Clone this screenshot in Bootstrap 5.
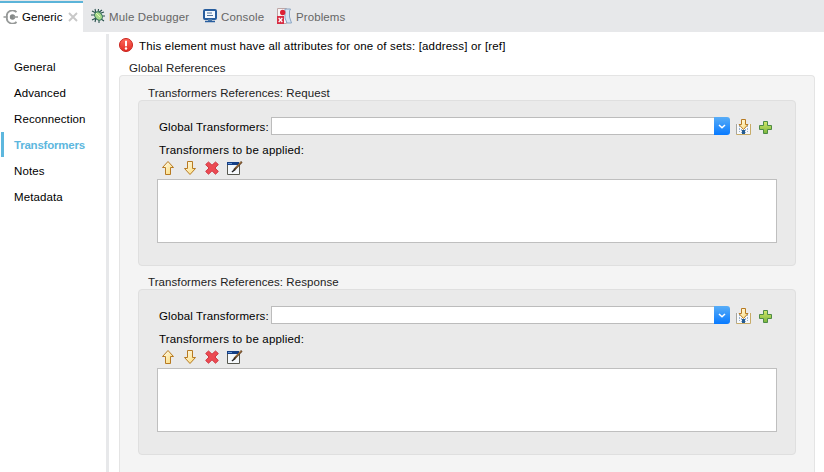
<!DOCTYPE html>
<html lang="en">
<head>
<meta charset="utf-8">
<meta name="viewport" content="width=device-width, initial-scale=1">
<title>Generic</title>
<link href="https://cdn.jsdelivr.net/npm/bootstrap@5.3.0/dist/css/bootstrap.min.css" rel="stylesheet">
<style>
body{font-family:"Liberation Sans",Arial,sans-serif;font-size:11.5px;line-height:14px;letter-spacing:.16px;color:#000;background:#fff;height:472px;overflow:hidden}
svg{display:block;flex:none}
.tabbar{height:32px;background:#e7e8ea;color:#666}
.tabbar .nav-item{height:32px;padding-top:2px;gap:4px}
.tabbar .nav-item>svg{margin-bottom:2px}
.tabbar .tab-active>svg{margin-bottom:0}
.tabbar .tab-active{width:83px;background:#fff;color:#000;border-top:1px solid #e7e8ea;box-shadow:inset 0 2px #5bb4d9;padding-left:3px;padding-top:1px;letter-spacing:.03px}
.tab-active span{width:42px}
.tab-debug{width:113px;padding-left:8px;letter-spacing:.12px}
.tab-console{width:81px;padding-left:7px}
.tab-problems{letter-spacing:.1px}
.side{width:106px;padding-top:22px}
.side a{height:26px;padding-left:14px;color:#000;text-decoration:none;letter-spacing:.1px}
.side a.active{margin-left:1px;margin-bottom:1px;height:25px;padding:1px 0 0 13px;color:#5db7de;font-weight:bold;box-shadow:inset 3px 0 #5db7de;letter-spacing:-.22px}
.rule{width:3px;margin-top:2px;background:#e7e8ea}
.pane{padding:6px 9px 0 10px;min-width:0}
.notice{height:14px;gap:6px;letter-spacing:.18px}
.notice span{padding-top:2px}
.outer{background:#f4f4f4;border:1px solid #e4e4e4;border-bottom:0;border-radius:4px 4px 0 0;height:410px;padding:10px 18px 0}
.inner{background:#eaeaea;border:1px solid #dfdfdf;border-radius:4px;height:166px;padding:16px 18px 0}
.caption-line{color:#222;height:14px;padding-left:10px;letter-spacing:.08px}
.second{margin-top:9px}
.picker{height:18px}
.picker-label{width:114px;padding:3px 0 0 2px;white-space:nowrap;letter-spacing:.12px}
.combo{width:459px}
.combo .field{background:#fff;border:1px solid #bcbcbc;border-right:0}
.combo .drop{width:16px;background:linear-gradient(#58adf7,#087aff);border-radius:0 3px 3px 0}
.applied{margin-top:8px;padding-left:2px;letter-spacing:.18px}
.tools{height:16px;margin:3px 0;padding-left:4px;gap:8px}
.listing{height:64px;border:1px solid #bfbfbf;background:#fff}
</style>
<script src="https://cdn.jsdelivr.net/npm/bootstrap@5.3.0/dist/js/bootstrap.bundle.min.js"></script>
</head>
<body class="d-flex flex-column">
<svg width="0" height="0" class="position-absolute">
<defs>
<linearGradient id="gold" x2="1" y2="1"><stop stop-color="#fffdf0"/><stop offset="1" stop-color="#fbd973"/></linearGradient>
<linearGradient id="green" x2="0" y2="1"><stop stop-color="#d4e86a"/><stop offset="1" stop-color="#7ab63c"/></linearGradient>
<linearGradient id="alert" x2="0" y2="1"><stop stop-color="#ff6a5c"/><stop offset="1" stop-color="#e02a22"/></linearGradient>
<symbol id="up" viewBox="0 0 14 16"><path d="M7 1.500 12.500 7.500H9.500V14.500H4.500V7.500H1.500Z" fill="url(#gold)" stroke="#b77a22"/></symbol>
<symbol id="down" viewBox="0 0 14 16"><path d="M4.500 1.500H9.500V8.500H12.500L7 14.500 1.500 8.500H4.500Z" fill="url(#gold)" stroke="#b77a22"/></symbol>
<symbol id="del" viewBox="0 0 14 14"><path d="M3.500 1 7 4.200 10.500 1 13.300 3.500 10 7 13.300 10.500 10.500 13.200 7 9.800 3.500 13.200 .7 10.500 4 7 .7 3.500Z" fill="#ec4a52" stroke="#cf3640"/></symbol>
<symbol id="edit" viewBox="0 0 16 14"><path d="M.5 2.500H12.500V13.500H.5Z" fill="#f5f8fb" stroke="#57584f"/><path d="M0 1H12V4H0Z" fill="#153f86"/><path d="M1 2.500H5" stroke="#7faee8" stroke-width=".8"/><path d="M14.800 .8 7 9" stroke="#5b3d20" stroke-width="2"/><path d="M14.300 1 9 6.500" stroke="#d59a55" stroke-width=".8"/><path d="M5 11 8 8.500" stroke="#222" stroke-width="1.500"/></symbol>
<symbol id="import" viewBox="0 0 15 16"><path d="M.5 5V15.500H14.500V5" fill="#f6f8fb" stroke="#c7ab68"/><path d="M.5 5V15" stroke="#a5a59d"/><path d="M3.500 6V13M5.500 10V14M9.500 10V14M11.500 6V13" stroke="#9bb2cd" stroke-dasharray="2 1"/><path d="M6 11H9V15H6Z" fill="#245b91"/><path d="M5.500 .5H9.500V5.500H12L7.500 10.500 3 5.500H5.500Z" fill="url(#gold)" stroke="#b77a22"/></symbol>
<symbol id="add" viewBox="0 0 14 14"><path d="M5.500 .5H9.500V4.500H13.500V8.500H9.500V12.500H5.500V8.500H1.500V4.500H5.500Z" fill="url(#green)" stroke="#4d8b46"/></symbol>
<symbol id="chev" viewBox="0 0 8 5"><path d="M1 1 4 3.800 7 1" fill="none" stroke="#fff" stroke-width="1.500"/></symbol>
</defs>
</svg>
<nav class="tabbar nav flex-nowrap">
<div class="nav-item tab-active d-flex align-items-center"><svg width="15" height="14" viewBox="0 0 15 14"><path d="M13.500 2.200A5.500 5.500 0 0 0 4 7 5.500 5.500 0 0 0 13.500 11.800" fill="none" stroke="#969998" stroke-width="1.800"/><circle cx="9.500" cy="7" r="2.700" fill="#858988"/><path d="M.5 7H4M10 7H15" stroke="#969998" stroke-width="1.500"/></svg><span>Generic</span><svg width="10" height="10" viewBox="0 0 10 10"><path d="M1 1 9 9M9 1 1 9" stroke="#c8c8c8" stroke-width="1.900"/></svg></div>
<div class="nav-item tab-debug d-flex align-items-center"><svg width="14" height="16" viewBox="0 0 14 16"><path d="M4 1 5 5 1 3M0 7H4M1 12 5 10 4 14M8 11V15M7.500 1 7 5 11 2M10 5 13 4M10 8H14M10 11 13 13" fill="none" stroke="#28504c" stroke-width="1.100"/><ellipse cx="7.500" cy="8" rx="3.500" ry="4.500" transform="rotate(-35 7.500 8)" fill="#a6d98b" stroke="#34705c"/><path d="M5 5 9 9" stroke="#e7f7b6"/></svg><span>Mule Debugger</span></div>
<div class="nav-item tab-console d-flex align-items-center"><svg width="14" height="14" viewBox="0 0 14 14"><rect x="1" y="1" width="12" height="9" rx="1" fill="#f4f9ff" stroke="#275d9e" stroke-width="2"/><path d="M4 4H9M4 6.500H10" stroke="#50729b"/><path d="M5 10H9V12H5Z" fill="#547eaa"/><path d="M2 12.500H12" stroke="#275d9e" stroke-width="1.500"/></svg><span>Console</span></div>
<div class="nav-item tab-problems d-flex align-items-center"><svg width="15" height="16" viewBox="0 0 15 16"><path d="M.5 .5H9.500V15.500H.5Z" fill="#f7f4f5" stroke="#bea6a6"/><path d="M8 1H13.500L12.500 3V9L14.500 15H10L8 10Z" fill="#d5e4f3" stroke="#8ba6c3"/><circle cx="5.700" cy="4.500" r="2.700" fill="#dc2136"/><rect y="8" width="7" height="8" fill="#d72e45"/><path d="M1.700 10 5.300 14M5.300 10 1.700 14" stroke="#fff" stroke-width="1.200"/></svg><span>Problems</span></div>
</nav>
<div class="d-flex flex-grow-1">
<nav class="side nav flex-column flex-nowrap">
<a href="#" class="d-flex align-items-center">General</a>
<a href="#" class="d-flex align-items-center">Advanced</a>
<a href="#" class="d-flex align-items-center">Reconnection</a>
<a href="#" class="d-flex align-items-center active">Transformers</a>
<a href="#" class="d-flex align-items-center">Notes</a>
<a href="#" class="d-flex align-items-center">Metadata</a>
</nav>
<div class="rule"></div>
<main class="pane flex-grow-1">
<div class="notice d-flex align-items-center"><svg width="14" height="14" viewBox="0 0 14 14"><circle cx="7" cy="7" r="6.500" fill="url(#alert)" stroke="#c9231d"/><path d="M7 2.800V8.200" stroke="#fff" stroke-width="2"/><circle cx="7" cy="10.500" r="1.200" fill="#fff"/></svg><span>This element must have all attributes for one of sets: [address] or [ref]</span></div>
<div class="caption-line second">Global References</div>
<section class="outer">
<div class="caption-line">Transformers References: Request</div>
<div class="inner">
<div class="picker d-flex"><label class="picker-label">Global Transformers:</label><div class="combo d-flex"><div class="field flex-grow-1"></div><div class="drop d-flex align-items-center justify-content-center"><svg width="8" height="5"><use href="#chev"/></svg></div></div><svg class="ms-1" width="19" height="18"><use href="#import" x="2" y="2" width="15" height="16"/></svg><svg class="ms-1" width="16" height="18"><use href="#add" x="1" y="4" width="14" height="14"/></svg></div>
<div class="applied">Transformers to be applied:</div>
<div class="tools d-flex align-items-center"><svg width="14" height="16"><use href="#up"/></svg><svg width="14" height="16"><use href="#down"/></svg><svg width="14" height="14"><use href="#del"/></svg><svg width="16" height="14"><use href="#edit"/></svg></div>
<div class="listing"></div>
</div>
<div class="caption-line second">Transformers References: Response</div>
<div class="inner">
<div class="picker d-flex"><label class="picker-label">Global Transformers:</label><div class="combo d-flex"><div class="field flex-grow-1"></div><div class="drop d-flex align-items-center justify-content-center"><svg width="8" height="5"><use href="#chev"/></svg></div></div><svg class="ms-1" width="19" height="18"><use href="#import" x="2" y="2" width="15" height="16"/></svg><svg class="ms-1" width="16" height="18"><use href="#add" x="1" y="4" width="14" height="14"/></svg></div>
<div class="applied">Transformers to be applied:</div>
<div class="tools d-flex align-items-center"><svg width="14" height="16"><use href="#up"/></svg><svg width="14" height="16"><use href="#down"/></svg><svg width="14" height="14"><use href="#del"/></svg><svg width="16" height="14"><use href="#edit"/></svg></div>
<div class="listing"></div>
</div>
</section>
</main>
</div>
</body>
</html>
